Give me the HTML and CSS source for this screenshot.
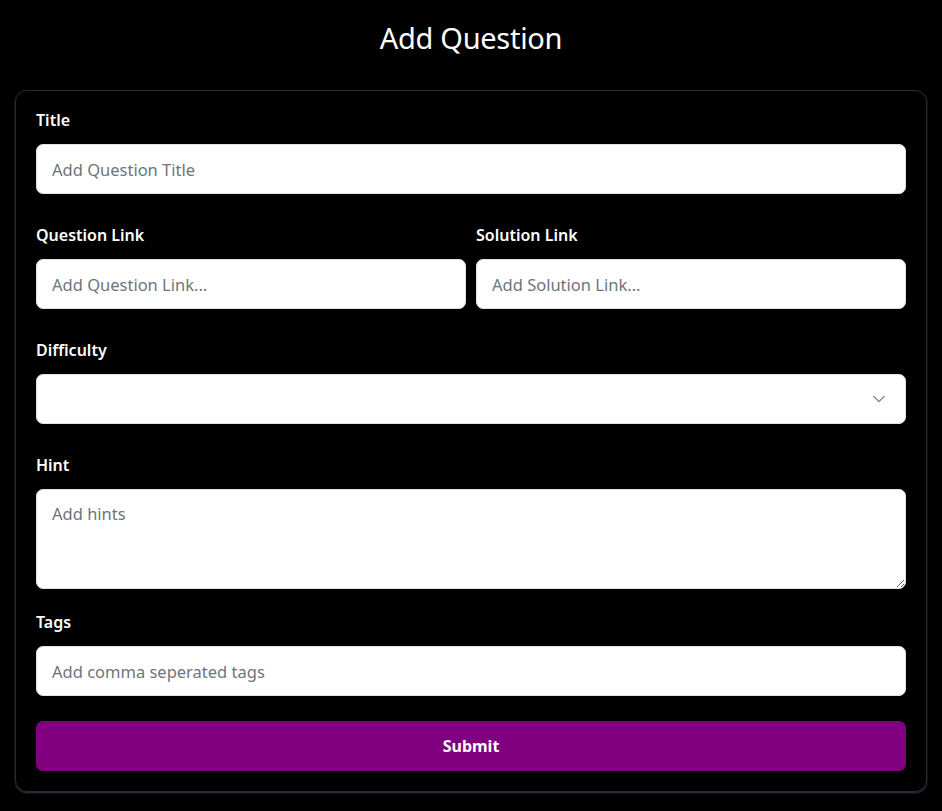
FILE: index.html
```html
<!DOCTYPE html>
<html lang="en">
<head>
<meta charset="utf-8">
<title>Add Question</title>
<link rel="stylesheet" href="styles.css">
</head>
<body>
<h1 class="page-title">Add Question</h1>
<form class="card">
  <div class="field">
    <label class="label" for="title">Title</label>
    <input class="control" id="title" type="text" placeholder="Add Question Title">
  </div>
  <div class="row">
    <div class="field">
      <label class="label" for="qlink">Question Link</label>
      <input class="control" id="qlink" type="text" placeholder="Add Question Link...">
    </div>
    <div class="field">
      <label class="label" for="slink">Solution Link</label>
      <input class="control" id="slink" type="text" placeholder="Add Solution Link...">
    </div>
  </div>
  <div class="field">
    <label class="label" for="diff">Difficulty</label>
    <div class="select-wrap">
      <select class="control select" id="diff">
        <option value=""></option>
        <option>Easy</option>
        <option>Medium</option>
        <option>Hard</option>
      </select>
      <svg class="chevron" width="14" height="14" viewBox="0 0 16 16" aria-hidden="true"><path d="M2 5l6 6 6-6" fill="none" stroke="#7a7f87" stroke-width="1.6" stroke-linecap="round" stroke-linejoin="round"/></svg>
    </div>
  </div>
  <div class="field field-hint">
    <label class="label" for="hint">Hint</label>
    <textarea class="control textarea" id="hint" placeholder="Add hints"></textarea>
  </div>
  <div class="field field-tags">
    <label class="label" for="tags">Tags</label>
    <input class="control" id="tags" type="text" placeholder="Add comma seperated tags">
  </div>
  <button class="submit" type="button">Submit</button>
</form>
</body>
</html>
```
FILE: styles.css
```css
* { box-sizing: border-box; }
html, body { margin: 0; padding: 0; }
body {
  background: #000;
  color: #fff;
  font-family: "Noto Sans", "Open Sans", sans-serif;
  width: 942px;
  height: 811px;
  overflow: hidden;
}
.page-title {
  margin: 20px 0 34px;
  height: 36px;
  line-height: 36px;
  font-size: 29px;
  font-weight: 400;
  text-align: center;
  letter-spacing: -0.3px;
}
.card {
  margin: 0 15px;
  border: 1px solid #2c2c38;
  border-radius: 12px;
  box-shadow: 0 1px 2px rgba(110, 110, 140, 0.55);
  padding: 17px 20px 20px;
  display: flex;
  flex-direction: column;
}
.field {
  display: flex;
  flex-direction: column;
  margin-bottom: 29px;
}
.row {
  display: grid;
  grid-template-columns: 1fr 1fr;
  column-gap: 10px;
}
.label {
  font-size: 16px;
  font-weight: 600;
  line-height: 24px;
  height: 24px;
  margin-bottom: 12px;
}
.control {
  display: block;
  width: 100%;
  height: 50px;
  border: 1px solid #dee2e6;
  border-radius: 7px;
  background: #fff;
  padding: 0 16px 0 15px;
  font-family: inherit;
  font-size: 16.5px;
  color: #212529;
  outline: none;
}
.control::placeholder { color: #6c757d; opacity: 1; }
.select-wrap { position: relative; }
.select { appearance: none; -webkit-appearance: none; }
.chevron {
  position: absolute;
  right: 20px;
  top: 18px;
  pointer-events: none;
}
.field-hint { margin-bottom: 21px; }
.textarea {
  height: 100px;
  padding: 12px 16px 12px 15px;
  resize: vertical;
  line-height: 24px;
}
.field-tags { margin-bottom: 25px; }
.submit {
  height: 50px;
  width: 100%;
  border: none;
  border-radius: 7px;
  background: #800080;
  color: #fff;
  font-family: inherit;
  font-size: 16px;
  font-weight: 700;
  cursor: pointer;
}
```
